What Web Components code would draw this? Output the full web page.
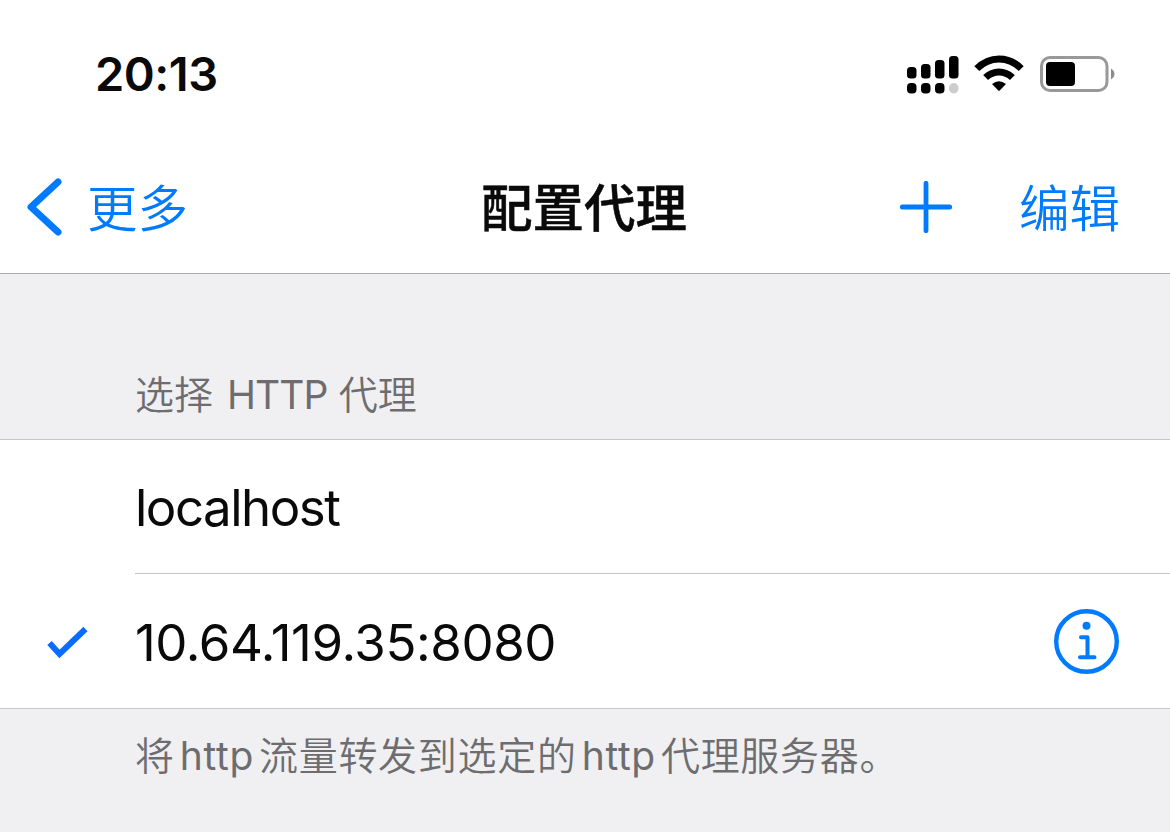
<!DOCTYPE html>
<html lang="zh-CN">
<head>
<meta charset="utf-8">
<title>配置代理</title>
<style>
body{margin:0;width:1170px;height:832px;overflow:hidden;background:#f0f0f3;font-family:Inter,"Noto Sans CJK SC",sans-serif;color:#0a0a0a}
</style>
</head>
<body>
<proxy-screen></proxy-screen>
<script>
const define = (name, html) => {
  const t = document.createElement('template');
  t.innerHTML = html;
  customElements.define(name, class extends HTMLElement {
    constructor() {
      super();
      this.attachShadow({mode: 'open'}).append(t.content.cloneNode(true));
    }
  });
};

define('signal-icon', `<style>:host{display:block;width:52px;height:38px}svg{display:block}</style>
<svg width="52" height="38" viewBox="0 0 52 38"><g fill="#000">
<rect x="0" y="11" width="9.500" height="11.500" rx="3.500"/><rect x="14" y="8" width="9.500" height="14.500" rx="3.500"/>
<rect x="28" y="4" width="9.500" height="18.500" rx="3.500"/><rect x="42" y="0" width="9.500" height="22.500" rx="3.500"/>
<rect x="0" y="27" width="9.500" height="10.500" rx="4"/><rect x="14" y="27" width="9.500" height="10.500" rx="4"/><rect x="28" y="27" width="9.500" height="10.500" rx="4"/></g>
<rect x="42" y="27" width="9.500" height="10.500" rx="4.700" fill="#ccc"/></svg>`);

define('wifi-icon', `<style>:host{display:block;width:50px;height:38px}svg{display:block}</style>
<svg width="50" height="38" viewBox="0 0 50 38"><g fill="none" stroke="#000" stroke-width="7">
<path d="M2.800 13.600Q12.500 3.900 25 3.900T47.200 13.600"/><path d="M11.600 22.500Q17.400 16.900 25 16.900T38.400 22.500"/></g>
<path d="M18 29Q25 23.400 32 29L25.700 35.600Q25 36.300 24.300 35.600Z"/></svg>`);

define('battery-icon', `<style>:host{display:block;width:76px;height:38px}svg{display:block}</style>
<svg width="76" height="38" viewBox="0 0 76 38"><rect x="1.500" y="1.500" width="65.500" height="33" rx="8.500" fill="#fff" stroke="#999" stroke-width="3"/>
<rect x="6" y="6" width="29" height="24" rx="4"/><path d="M71 12.500Q74.500 14.800 74.500 18T71 23.500Z" fill="#8c8c8c"/></svg>`);

define('status-bar', `<style>
:host{display:flex;align-items:flex-start;justify-content:space-between;height:140px;box-sizing:border-box;padding:0 54px 0 95px}
.time{font-size:47px;font-weight:600;line-height:56px;margin-top:46px;letter-spacing:-.5px}
.icons{display:flex;margin-top:56px}
wifi-icon{margin:-1px 16px 0 15px}
</style><div class="time"><slot></slot></div><div class="icons"><signal-icon></signal-icon><wifi-icon></wifi-icon><battery-icon></battery-icon></div>`);

define('nav-bar', `<style>
:host{display:grid;grid-template-columns:1fr auto 1fr;align-items:center;height:134px;box-sizing:border-box;border-bottom:1px solid #a9a9ae;color:#007aff;font-size:50.500px;line-height:76px}
.back,.actions{display:flex;align-items:center}
.back{padding-left:27px;gap:25px}
.actions{justify-content:flex-end;padding-right:50px;gap:67px}
.title{color:#0a0a0a;font-size:51.500px;font-weight:500;-webkit-text-stroke:.5px #0a0a0a;padding:3px 2px 0 0}
::slotted(span){padding-top:4px;font-weight:350}
svg{display:block}
</style>
<div class="back"><svg width="35" height="58" viewBox="0 0 35 58"><path d="M31 4L4 29L31 54" fill="none" stroke="#007aff" stroke-width="7" stroke-linecap="round" stroke-linejoin="round"/></svg><slot name="back"></slot></div>
<div class="title"><slot></slot></div>
<div class="actions"><svg width="52" height="52" viewBox="0 0 52 52"><path d="M26 2.300V49.700M2.300 26H49.700" fill="none" stroke="#007aff" stroke-width="4.800" stroke-linecap="round"/></svg><slot name="action"></slot></div>`);

define('list-header', `<style>
:host{display:block;height:166px;box-sizing:border-box;padding:92px 135px 0;border-bottom:1px solid #c4c4c9;color:#6d6d70;font-size:39px;font-weight:350;line-height:58px;letter-spacing:-.05px;white-space:pre}
::slotted(span){font-weight:400;letter-spacing:-.9px;margin:0 1px 0 4px}
</style><slot></slot>`);

define('list-group', `<style>:host{display:block;background:#fff;border-bottom:1px solid #c9c9cc}</style><slot></slot>`);

define('list-row', `<style>
:host{display:grid;grid-template-columns:135px 1fr;height:134px}
.mark{display:flex;align-items:center;padding:4px 0 0 47px}
.body{display:flex;align-items:center;justify-content:space-between;padding-right:51px;font-size:51px;line-height:62px;border-bottom:var(--divider,0)}
::slotted(span){padding-top:3px}
</style><div class="mark"><slot name="mark"></slot></div><div class="body"><slot></slot><slot name="accessory"></slot></div>`);

define('check-icon', `<style>:host{display:block}svg{display:block}</style>
<svg width="41" height="34" viewBox="0 0 41 34"><path d="M2.500 17L12.500 28L38.500 3" fill="none" stroke="#0a6cff" stroke-width="6"/></svg>`);

define('info-icon', `<style>:host{display:block}svg{display:block}</style>
<svg width="65" height="65" viewBox="0 0 65 65"><circle cx="32.500" cy="32.500" r="30.300" fill="none" stroke="#007aff" stroke-width="4.400"/><circle cx="32.500" cy="16.800" r="4" fill="#007aff"/><path d="M27 28.300H33.500V48.300M26 48.300H40.500" fill="none" stroke="#007aff" stroke-width="4" stroke-linecap="round" stroke-linejoin="round"/></svg>`);

define('list-footer', `<style>
:host{display:block;padding:18px 135px 0;color:#6d6d70;font-size:39px;font-weight:350;line-height:58px;letter-spacing:.7px;white-space:nowrap}
::slotted(span){margin:0 5px;font-weight:400;letter-spacing:.7px}
</style><slot></slot>`);

define('proxy-screen', `<style>
:host{display:block}
header{background:#fff}
.host{letter-spacing:-1.5px}
.addr{letter-spacing:-.4px}
.first{--divider:1px solid #c4c4c6}
</style>
<header><status-bar>20:13</status-bar><nav-bar><span slot="back">更多</span>配置代理<span slot="action">编辑</span></nav-bar></header>
<main><list-header>选择<span> HTTP </span>代理</list-header>
<list-group><list-row class="first"><span class="host">localhost</span></list-row>
<list-row><check-icon slot="mark"></check-icon><span class="addr">10.64.119.35:8080</span><info-icon slot="accessory"></info-icon></list-row></list-group>
<list-footer>将<span>http</span>流量转发到选定的<span>http</span>代理服务器。</list-footer></main>`);
</script>
</body>
</html>
